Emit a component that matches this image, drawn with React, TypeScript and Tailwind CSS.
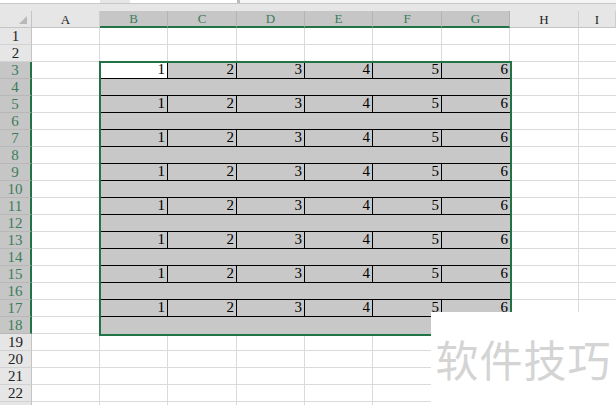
import React from 'react';

const cols = ['A', 'B', 'C', 'D', 'E', 'F', 'G', 'H', 'I'];
const widths = ['w-[68px]', 'w-[68px]', 'w-[69px]', 'w-[68px]', 'w-[68px]', 'w-[69px]', 'w-[68px]', 'w-[69px]', 'flex-1'];
const dataCols = ['w-[68px]', 'w-[69px]', 'w-[68px]', 'w-[68px]', 'w-[69px]', 'w-[68px]'];

const serif = { fontFamily: '"Liberation Serif", "DejaVu Serif", serif' };

function HeaderRow() {
  return (
    <div className="flex h-[17px]">
      <div className="relative w-[32px] shrink-0 border-r border-b border-[#c4c4c4] bg-[#e6e6e6]">
        <svg className="absolute right-[4px] bottom-[3px]" width="8" height="8" viewBox="0 0 8 8">
          <polygon points="8,0 8,8 0,8" fill="#b8b8b8" />
        </svg>
      </div>
      {cols.map((c, i) => {
        const sel = i >= 1 && i <= 6;
        return (
          <div
            key={c}
            className={`${widths[i]} shrink-0 flex items-center justify-center text-[13px] leading-none border-r ${
              sel
                ? 'bg-[#c6c6c6] text-[#3b7d5a] border-r-[#b4b4b4] border-b-2 border-b-[#217346]'
                : 'bg-[#e6e6e6] text-[#222] border-r-[#cfcfcf] border-b border-b-[#c4c4c4]'
            }`}
          >
            {c}
          </div>
        );
      })}
    </div>
  );
}

function DataRow({ row }: { row: number }) {
  const odd = row % 2 === 1;
  if (!odd) {
    return (
      <div
        className={`w-[410px] shrink-0 bg-[#c8c8c8] border-b ${row === 18 ? 'border-[#c8c8c8]' : 'border-black'}`}
      />
    );
  }
  return (
    <>
      {dataCols.map((w, i) => (
        <div
          key={i}
          className={`${w} shrink-0 border-b border-black flex items-end justify-end pr-[2px] pb-[1px] text-[15px] leading-none text-black ${
            i < 5 ? 'border-r' : ''
          } ${row === 3 && i === 0 ? 'bg-white' : 'bg-[#c8c8c8]'}`}
        >
          {i + 1}
        </div>
      ))}
    </>
  );
}

function BodyRow({ row }: { row: number }) {
  const sel = row >= 3 && row <= 18;
  return (
    <div className="flex h-[17px]">
      <div
        className={`w-[32px] shrink-0 flex items-center justify-center text-[15px] leading-none border-b ${
          sel
            ? 'bg-[#c6c6c6] text-[#3b7d5a] border-b-[#b8b8b8] border-r-2 border-r-[#217346]'
            : 'bg-[#e6e6e6] text-[#222] border-b-[#d2d2d2] border-r border-r-[#c4c4c4]'
        }`}
      >
        {row <= 22 ? row : ''}
      </div>
      <div className="w-[68px] shrink-0 bg-white border-r border-b border-[#dadada]" />
      {sel ? (
        <DataRow row={row} />
      ) : (
        dataCols.map((w, i) => (
          <div
            key={i}
            className={`${w} shrink-0 bg-white border-b ${
              row === 2 ? 'border-b-black' : 'border-b-[#dadada]'
            } border-r border-r-[#dadada]`}
          />
        ))
      )}
      <div className="w-[69px] shrink-0 bg-white border-r border-b border-[#dadada]" />
      <div className="flex-1 bg-white border-b border-[#dadada]" />
    </div>
  );
}

export default function App() {
  const rows = Array.from({ length: 23 }, (_, i) => i + 1);
  return (
    <div className="relative w-[616px] h-[405px] overflow-hidden bg-white" style={serif}>
      <div className="flex h-[4px] border-b border-[#c8c8c8]">
        <div className="w-[100px] bg-white" />
        <div className="w-[30px] bg-[#e6e6e6]" />
        <div className="w-[107px] bg-white" />
        <div className="w-[3px] bg-[#bdbdbd]" />
        <div className="flex-1 bg-[#f4f4f4]" />
      </div>
      <div className="h-[7px] bg-[#e6e6e6]" />
      <HeaderRow />
      {rows.map((r) => (
        <BodyRow key={r} row={r} />
      ))}

      <div className="absolute left-[99px] top-[61px] w-[413px] h-[275px] border-2 border-[#217346] pointer-events-none" />

      <div
        className="absolute left-[431px] top-[312px] w-[185px] h-[93px] bg-white flex items-center justify-center text-[43px] text-[#d4d4d4] tracking-[1px]"
        style={{ fontFamily: '"Noto Sans CJK SC", "Noto Sans", sans-serif' }}
      >
        软件技巧
      </div>
    </div>
  );
}
